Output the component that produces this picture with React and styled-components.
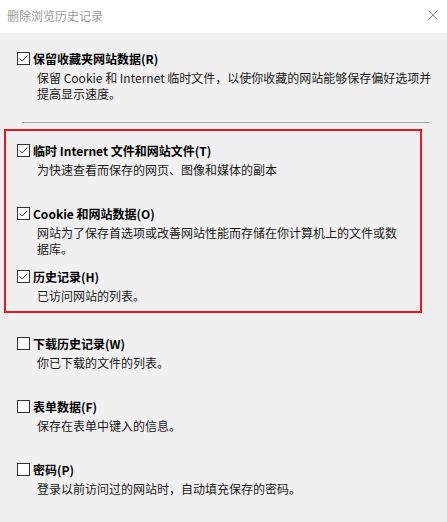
import React from "react";
import styled, { createGlobalStyle } from "styled-components";

const GlobalStyle = createGlobalStyle`
  body {
    margin: 0;
    background-color: #f0f0f0;
    font-family: "Microsoft YaHei", "Noto Sans CJK SC", "Noto Sans", sans-serif;
    font-size: 12px;
    color: #1a1a1a;
  }
`;

const StyledDialog = styled.div`
  width: 447px;
  height: 522px;
  display: flex;
  flex-direction: column;
  background-color: #f0f0f0;
  overflow: hidden;
`;

const StyledTitleBar = styled.header`
  height: 33px;
  flex-shrink: 0;
  display: flex;
  align-items: center;
  justify-content: space-between;
  padding: 0 9px 3px 7px;
  box-sizing: border-box;
  background-color: #ffffff;
`;

const StyledTitle = styled.h1`
  margin: 0;
  font-size: 12px;
  font-weight: normal;
  color: #9a9a9a;
`;

const StyledCloseButton = styled.button`
  display: flex;
  align-items: center;
  justify-content: center;
  width: 10px;
  height: 10px;
  padding: 0;
  border: none;
  background: none;
`;

const StyledContent = styled.main`
  display: flex;
  flex-direction: column;
  padding: 4px 17px 0 4px;
`;

const StyledGroup = styled.section`
  margin-right: 8px;
  padding: 10px 0 7px 11px;
  border: 2px solid ${({ $highlight }) => ($highlight ? "#e5171f" : "transparent")};

  & + & {
    margin-top: 9px;
  }
`;

const StyledSeparator = styled.hr`
  height: 1px;
  margin: 11px 0 6px 18px;
  border: none;
  background-color: #a6a6a6;
`;

const StyledItem = styled.div`
  height: 63px;

  &:last-child {
    height: auto;
  }
`;

const StyledLabel = styled.label`
  display: flex;
  align-items: center;
  gap: 3px;
  height: 18px;
  font-weight: bold;
  color: #000000;
`;

const StyledBox = styled.span`
  width: 13px;
  height: 13px;
  display: flex;
  flex-shrink: 0;
  box-sizing: border-box;
  border: 1px solid #333333;
  background-color: #ffffff;
`;

const StyledDescription = styled.p`
  margin: 3px 0 0 20px;
  line-height: 16px;
  white-space: nowrap;
  color: #1a1a1a;
`;

const options = [
  {
    group: "keep",
    label: "保留收藏夹网站数据(R)",
    checked: true,
    lines: [
      "保留 Cookie 和 Internet 临时文件，以使你收藏的网站能够保存偏好选项并",
      "提高显示速度。",
    ],
  },
  {
    group: "marked",
    label: "临时 Internet 文件和网站文件(T)",
    checked: true,
    lines: ["为快速查看而保存的网页、图像和媒体的副本"],
  },
  {
    group: "marked",
    label: "Cookie 和网站数据(O)",
    checked: true,
    lines: [
      "网站为了保存首选项或改善网站性能而存储在你计算机上的文件或数",
      "据库。",
    ],
  },
  {
    group: "marked",
    label: "历史记录(H)",
    checked: true,
    lines: ["已访问网站的列表。"],
  },
  {
    group: "rest",
    label: "下载历史记录(W)",
    checked: false,
    lines: ["你已下载的文件的列表。"],
  },
  {
    group: "rest",
    label: "表单数据(F)",
    checked: false,
    lines: ["保存在表单中键入的信息。"],
  },
  {
    group: "rest",
    label: "密码(P)",
    checked: false,
    lines: ["登录以前访问过的网站时，自动填充保存的密码。"],
  },
];

function Checkbox({ checked }) {
  return (
    <StyledBox>
      {checked && (
        <svg width="11" height="11" viewBox="0 0 11 11">
          <path d="M1.6 5.4 L4.2 8 L9.4 2.6" fill="none" stroke="#333333" strokeWidth="1" />
        </svg>
      )}
    </StyledBox>
  );
}

function Option({ label, checked, lines }) {
  return (
    <StyledItem>
      <StyledLabel>
        <Checkbox checked={checked} />
        {label}
      </StyledLabel>
      <StyledDescription>
        {lines.map((line, index) => (
          <React.Fragment key={line}>
            {index > 0 && <br />}
            {line}
          </React.Fragment>
        ))}
      </StyledDescription>
    </StyledItem>
  );
}

function Group({ name, highlight }) {
  return (
    <StyledGroup $highlight={highlight}>
      {options
        .filter((option) => option.group === name)
        .map((option) => (
          <Option key={option.label} {...option} />
        ))}
    </StyledGroup>
  );
}

export default function App() {
  return (
    <StyledDialog>
      <GlobalStyle />
      <StyledTitleBar>
        <StyledTitle>删除浏览历史记录</StyledTitle>
        <StyledCloseButton type="button" aria-label="关闭">
          <svg width="10" height="10" viewBox="0 0 10 10">
            <path d="M0.5 0.5 L9.5 9.5 M9.5 0.5 L0.5 9.5" stroke="#8a8a8a" strokeWidth="1" />
          </svg>
        </StyledCloseButton>
      </StyledTitleBar>
      <StyledContent>
        <Group name="keep" />
        <StyledSeparator />
        <Group name="marked" highlight />
        <Group name="rest" />
      </StyledContent>
    </StyledDialog>
  );
}
